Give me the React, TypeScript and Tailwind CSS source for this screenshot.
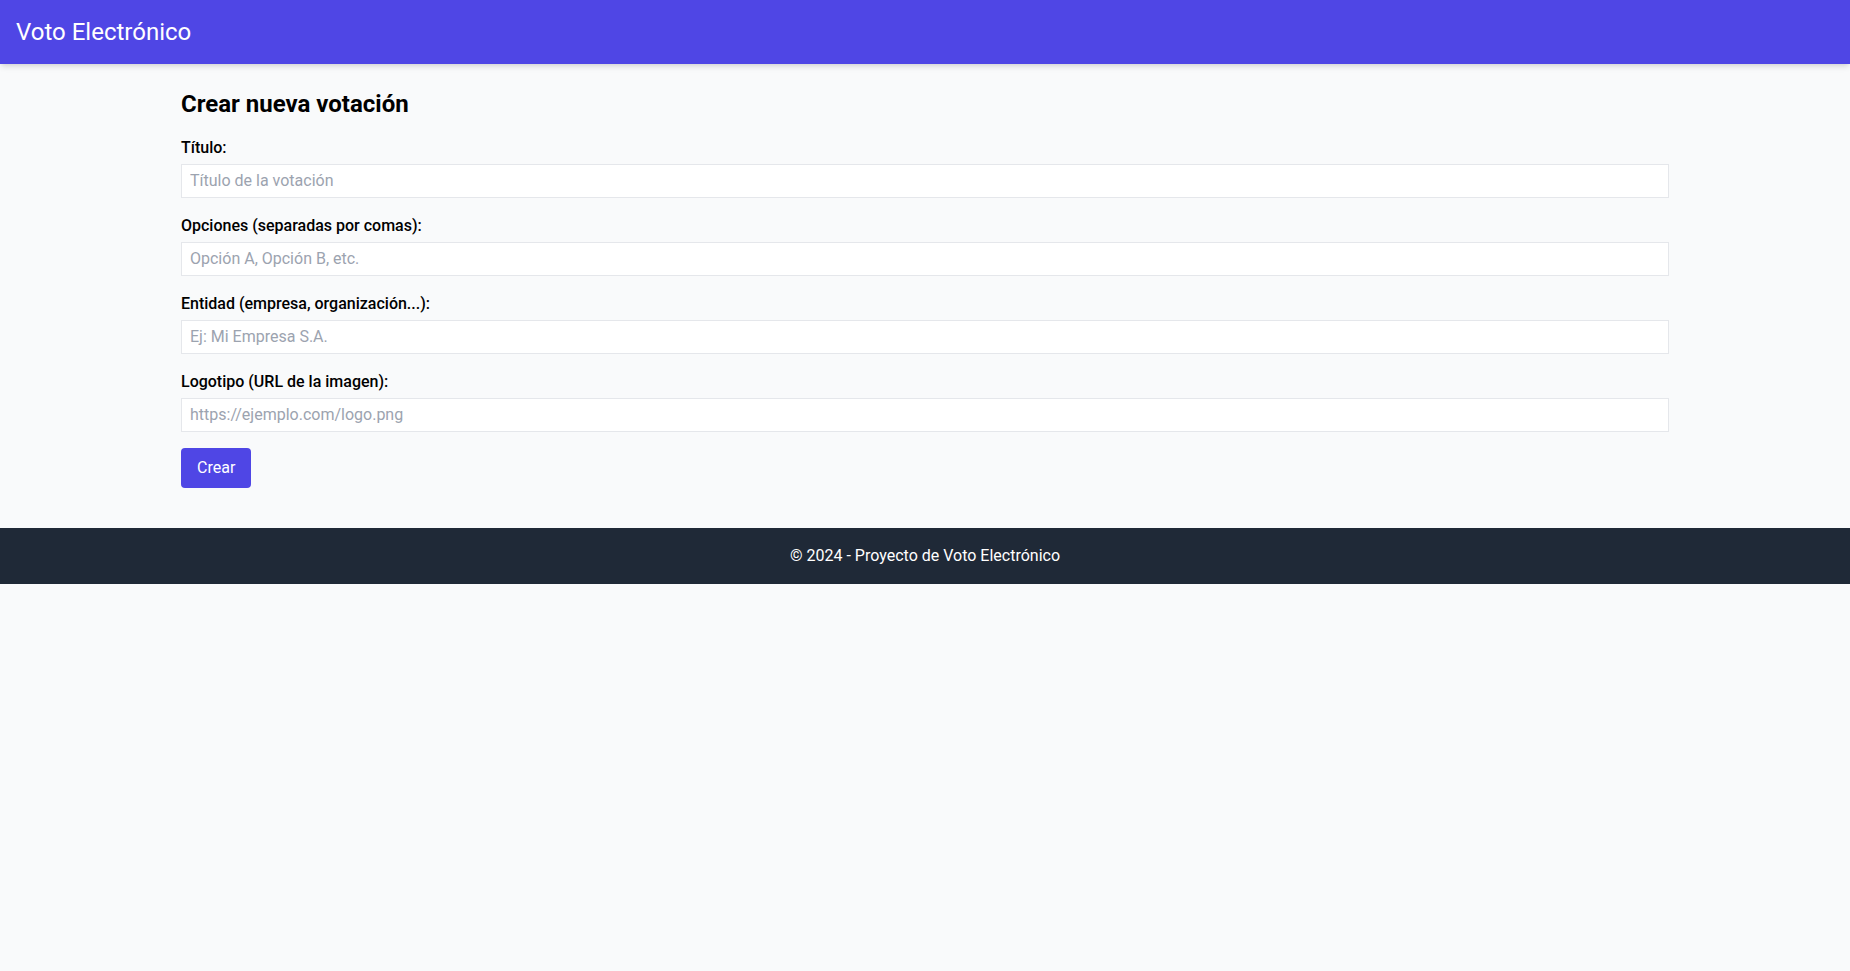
import { useState } from "react";

const campos = [
  { id: "titulo", label: "Título:", placeholder: "Título de la votación" },
  { id: "opciones", label: "Opciones (separadas por comas):", placeholder: "Opción A, Opción B, etc." },
  { id: "entidad", label: "Entidad (empresa, organización...):", placeholder: "Ej: Mi Empresa S.A." },
  { id: "logo", label: "Logotipo (URL de la imagen):", placeholder: "https://ejemplo.com/logo.png" },
];

export default function App() {
  const [form, setForm] = useState<Record<string, string>>({});

  return (
    <div className="min-h-screen bg-[#f9fafb] font-[Roboto,'Noto_Sans',sans-serif] text-black">
      <header className="bg-[#4f46e5] text-white shadow-md">
        <div className="px-4 h-16 flex items-center">
          <h1 className="text-2xl">Voto Electrónico</h1>
        </div>
      </header>

      <main className="container mx-auto px-6 pt-6 pb-10">
        <h2 className="text-2xl font-bold mb-4">Crear nueva votación</h2>
        <form onSubmit={(e) => e.preventDefault()}>
          {campos.map((c) => (
            <div key={c.id} className="mb-4">
              <label htmlFor={c.id} className="block font-medium mb-1">
                {c.label}
              </label>
              <input
                id={c.id}
                value={form[c.id] ?? ""}
                placeholder={c.placeholder}
                onChange={(e) => setForm({ ...form, [c.id]: e.target.value })}
                className="w-full bg-white border border-[#e5e7eb] px-2 py-1 placeholder:text-[#9ca3af] outline-none"
              />
            </div>
          ))}
          <button type="submit" className="bg-[#4f46e5] text-white px-4 py-2 rounded">
            Crear
          </button>
        </form>
      </main>

      <footer className="bg-[#1f2937] text-white text-center py-4">
        © 2024 - Proyecto de Voto Electrónico
      </footer>
    </div>
  );
}
